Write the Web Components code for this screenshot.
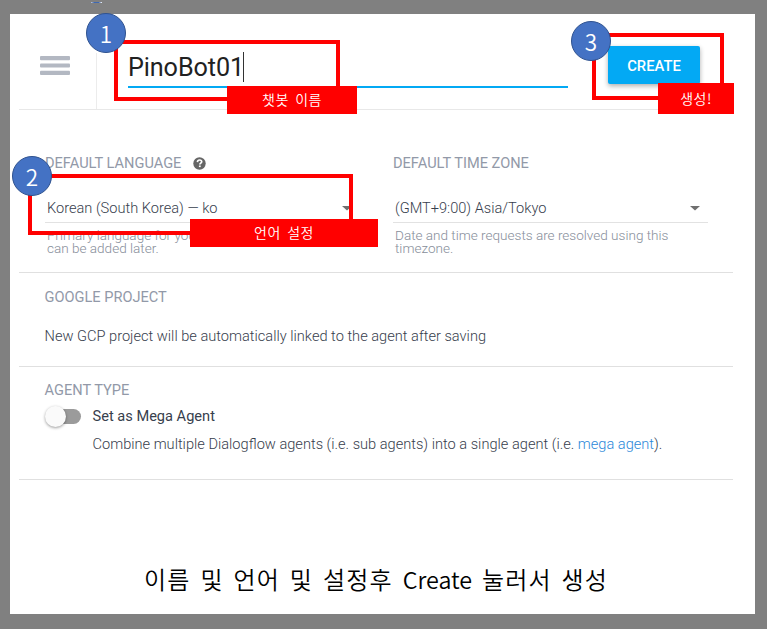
<!DOCTYPE html>
<html lang="ko">
<head>
<meta charset="utf-8">
<title>Agent setup</title>
<style>
html, body { margin: 0; height: 100%; overflow: hidden; background: #808080; }
</style>
</head>
<body>
<guide-slide></guide-slide>
<script>
const define = (name, html) => customElements.define(name, class extends HTMLElement {
  constructor() {
    super();
    this.attachShadow({ mode: 'open' }).innerHTML = html;
  }
});

define('menu-icon', `
<style>:host{display:block;width:30px;height:20px}svg{display:block}</style>
<svg width="30" height="20" fill="#b3b8c2"><rect y="0" width="30" height="4.2" rx="1"/><rect y="7.4" width="30" height="4.2" rx="1"/><rect y="14.8" width="30" height="4.2" rx="1"/></svg>`);

define('name-input', `
<style>
:host{display:flex;box-sizing:border-box;width:440px;height:35px;border-bottom:2px solid #03a9f4;font:400 25.2px/29px Roboto,sans-serif;letter-spacing:-.1px;color:#212121}
.caret{width:1px;height:30px;background:#333;margin:-1px 0 0 -1px}
</style><slot></slot><span class="caret"></span>`);

define('raised-button', `
<style>
:host{display:flex;align-items:center;justify-content:center;width:92px;height:38px;background:#03a9f4;border-radius:2px;color:#fff;font:500 14.8px/20px Roboto,sans-serif;box-shadow:0 2px 5px rgba(0,0,0,.32);box-sizing:border-box;padding-top:1px}
</style><slot></slot>`);

define('field-label', `
<style>
:host{display:flex;align-items:center;gap:12px;height:20px;font:400 14.6px/20px Roboto,sans-serif;color:#9299a8;white-space:nowrap}
</style><slot></slot>`);

define('help-icon', `
<style>:host{display:block;width:13px;height:13px}svg{display:block}</style>
<svg width="13" height="13" viewBox="0 0 13 13"><circle cx="6.5" cy="6.5" r="6.2" fill="#666"/><path d="M4.4 5.1C4.5 3.7 5.4 3 6.6 3c1.2 0 2.1.7 2.1 1.7 0 1.4-1.9 1.4-1.9 2.9" fill="none" stroke="#fff" stroke-width="1.7"/><rect x="5.9" y="8.5" width="1.8" height="1.6" fill="#fff"/></svg>`);

define('select-field', `
<style>
:host{display:block;width:315px}
.value{display:flex;align-items:center;justify-content:space-between;box-sizing:border-box;height:27px;padding:0 8px 3px 2px;border-bottom:1px solid #e2e2e2;font:300 14.6px/22px Roboto,sans-serif;color:#37404d;white-space:nowrap}
.hint{padding:6px 0 0 2px;font:300 13.55px/13px Roboto,sans-serif;color:#878e9a;white-space:nowrap}
svg{display:block;margin-top:1px}
</style>
<div class="value"><slot></slot><svg width="10" height="5"><path d="M0 0h10L5 4.5z" fill="#707070"/></svg></div>
<div class="hint"><slot name="hint"></slot></div>`);

define('toggle-switch', `
<style>
:host{display:flex;align-items:center;width:36px;height:22px}
.track{box-sizing:border-box;width:33px;height:15px;margin-left:3px;border-radius:8px;background:#9b9b9b;display:flex;align-items:center}
.knob{flex:none;width:21px;height:21px;margin-left:-3px;border-radius:50%;background:#fafafa;box-shadow:0 1px 3px rgba(0,0,0,.4)}
</style><div class="track"><div class="knob"></div></div>`);

define('step-badge', `
<style>
:host{position:absolute;box-sizing:border-box;width:40px;height:40px;border:1px solid #2f528f;border-radius:50%;background:#4472c4;color:#fff;font:350 22.5px/38px "Noto Sans CJK KR",sans-serif;text-align:center}
</style><slot></slot>`);

define('mark-frame', `
<style>:host{position:absolute;box-sizing:border-box;border:4px solid #f00}</style>`);

define('mark-label', `
<style>
:host{position:absolute;box-sizing:border-box;display:flex;align-items:center;justify-content:center;padding-bottom:2px;background:#f00;color:#fff;font:350 14px/20px "Noto Sans CJK KR",sans-serif;letter-spacing:.5px;word-spacing:2px;white-space:nowrap}
</style><slot></slot>`);

define('agent-form', `
<style>
:host{display:block;width:714px;margin-left:9px;font-family:Roboto,sans-serif}
header{display:flex;box-sizing:border-box;height:96px;border-bottom:1px solid #e8e8e8}
menu-icon{margin:42px 0 0 21px}
.rule{width:1px;height:56px;margin:39px 31px 0 26px;background:#ececec}
name-input{margin-top:39px}
raised-button{margin:32px 0 0 40px}
section{box-sizing:border-box;border-bottom:1px solid #e0e0e0;padding-left:25.5px}
.fields{display:flex;gap:33px;height:163px;padding-top:43px}
.fields>div{padding-left:.5px;margin-right:-.5px}
select-field{margin-top:23px}
.project{height:94px;padding-top:14px}
.type{height:113px;padding-top:13px}
p{margin:0;font:300 14.62px/20px Roboto,sans-serif;color:#37404d;white-space:nowrap}
.project p{margin-top:19px}
.row{display:flex;gap:12px;margin-top:5px}
.row strong{display:block;font:400 14.6px/20px Roboto,sans-serif;color:#37404d;margin-top:1px}
.row p{margin-top:8px}
a{color:#2b88d9}
</style>
<header><menu-icon></menu-icon><div class="rule"></div><name-input>PinoBot01</name-input><raised-button>CREATE</raised-button></header>
<section class="fields">
 <div><field-label>DEFAULT LANGUAGE<help-icon></help-icon></field-label>
 <select-field>Korean (South Korea) — ko<span slot="hint">Primary language for your agent. Other languages<br>can be added later.</span></select-field></div>
 <div><field-label>DEFAULT TIME ZONE</field-label>
 <select-field>(GMT+9:00) Asia/Tokyo<span slot="hint">Date and time requests are resolved using this<br>timezone.</span></select-field></div>
</section>
<section class="project"><field-label>GOOGLE PROJECT</field-label><p>New GCP project will be automatically linked to the agent after saving</p></section>
<section class="type"><field-label>AGENT TYPE</field-label>
 <div class="row"><toggle-switch></toggle-switch><div><strong>Set as Mega Agent</strong><p>Combine multiple Dialogflow agents (i.e. sub agents) into a single agent (i.e. <a>mega agent</a>).</p></div></div>
</section>`);

define('guide-slide', `
<style>
:host{display:block;position:relative;width:767px;height:629px;box-sizing:border-box;padding:14px 12px 15px 10px;background:#808080}
main{display:flow-root;height:600px;background:#fff}
.caption{margin:83px 0 0 134px;font:350 24px/32px "Noto Sans CJK KR",sans-serif;letter-spacing:1.2px;word-spacing:1.9px;color:#000;white-space:nowrap}
.caption span{font-size:23.3px;letter-spacing:0}
.sliver{position:absolute;left:91px;top:2px;width:11px;height:1px;background:linear-gradient(90deg,#c3cde0,#3f68b0 30% 70%,#fff)}
</style>
<main><agent-form></agent-form><div class="caption">이름 및 언어 및 설정후 <span>Create</span> 눌러서 생성</div></main>
<div class="sliver"></div>
<mark-frame style="left:114px;top:40px;width:226px;height:61px"></mark-frame>
<mark-label style="left:227px;top:86px;width:130px;height:28px">챗봇 이름</mark-label>
<step-badge style="left:86px;top:13px">1</step-badge>
<mark-frame style="left:28px;top:174px;width:325px;height:61px"></mark-frame>
<mark-label style="left:190px;top:219px;width:188px;height:28px">언어 설정</mark-label>
<step-badge style="left:12px;top:156px">2</step-badge>
<mark-frame style="left:592px;top:33px;width:132px;height:67px"></mark-frame>
<mark-label style="left:658px;top:83px;width:76px;height:31px">생성!</mark-label>
<step-badge style="left:571px;top:21px">3</step-badge>`);
</script>
</body>
</html>
